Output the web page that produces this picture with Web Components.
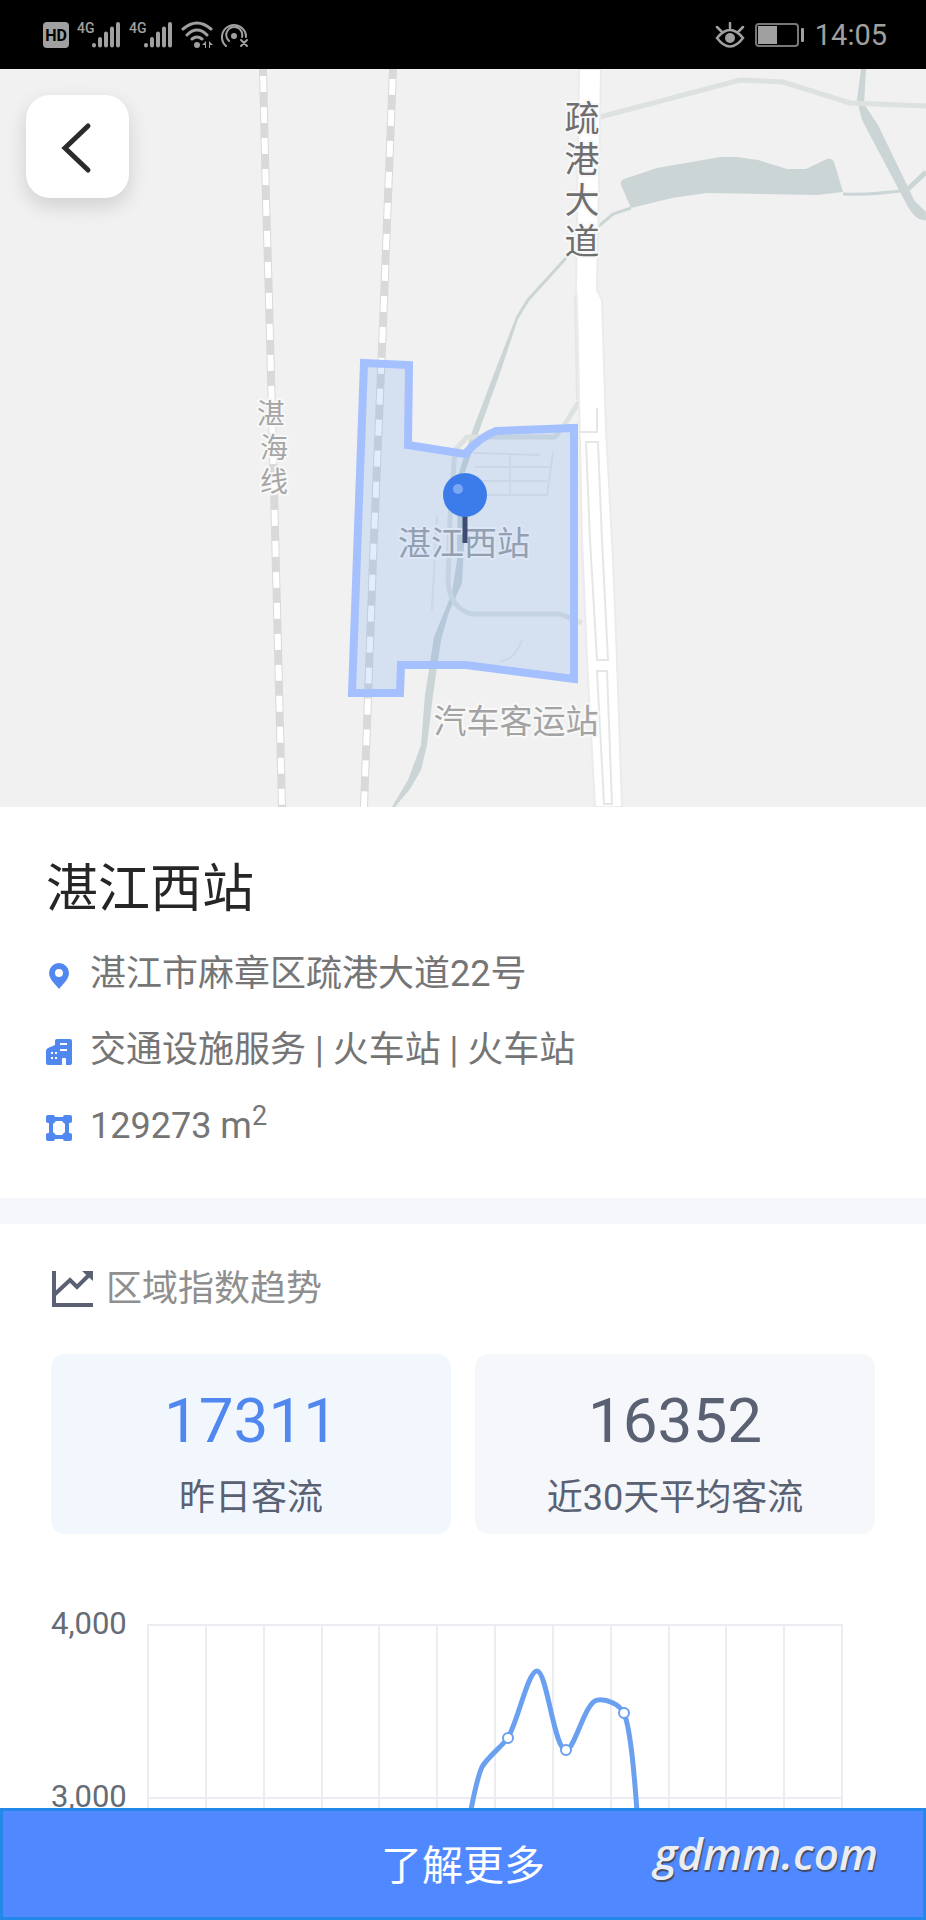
<!DOCTYPE html>
<html lang="zh-CN">
<head>
<meta charset="utf-8">
<meta name="viewport" content="width=device-width, initial-scale=1">
<title>湛江西站</title>
<style>
    body {
        margin: 0;
        font-family: Roboto, "Noto Sans CJK SC", sans-serif;
        background: #fff;
    }
</style>
</head>
<body>
<station-page></station-page>

<script>
class StatusBar extends HTMLElement {
    constructor() {
        super();
        this.attachShadow({mode: "open"});
    }

    connectedCallback() {
        const signal = `
            <svg width="44" height="30" viewBox="0 0 44 30">
                <text x="0" y="13" font-size="14" font-weight="500">4G</text>
                <g stroke="#a0a0a0" stroke-width="4" stroke-linecap="round">
                    <path d="M17 25v.5M23 19v6.500M29 13.500v12M35 8.500v17M41 4v21.500"/>
                </g>
            </svg>`;

        this.shadowRoot.innerHTML = `
        <style>
            :host {
                display: flex;
                flex: none;
                align-items: center;
                justify-content: space-between;
                height: 69px;
                padding: 0 39px 0 43px;
                box-sizing: border-box;
                background: #000;
                color: #a0a0a0;
                font-size: 29px;
            }

            div {
                display: flex;
                align-items: center;
                gap: 8px;
            }

            .right {
                gap: 10px;
            }

            svg {
                display: block;
                fill: #a0a0a0;
            }
        </style>
        <div>
            <svg width="26" height="26" viewBox="0 0 26 26">
                <rect width="26" height="26" rx="4"/>
                <text x="13" y="19" font-size="16" font-weight="700" text-anchor="middle" fill="#000">HD</text>
            </svg>
            ${signal}
            ${signal}
            <svg width="32" height="30" viewBox="0 0 32 30">
                <g fill="none" stroke="#a0a0a0" stroke-width="3" stroke-linecap="round">
                    <path d="M2 9Q16-3 30 9M6 15Q16 5 26 15M11 19Q16 15 21 19"/>
                </g>
                <circle cx="16" cy="25" r="3"/>
                <path d="M21 25l4-4v7h-1v-3zM28 21l4 4h-3v3h-1z"/>
            </svg>
            <svg width="28" height="30" viewBox="0 0 28 30">
                <g fill="none" stroke="#a0a0a0" stroke-width="2" stroke-linecap="round">
                    <path d="M5 26A12 12 0 1 1 25 17M8 21A8 8 0 1 1 21 17"/>
                    <path d="M20 20l6 6M26 20l-6 6"/>
                </g>
                <circle cx="13" cy="16" r="3"/>
            </svg>
        </div>
        <div class="right">
            <svg width="30" height="26" viewBox="0 0 30 26">
                <g fill="none" stroke="#a0a0a0" stroke-width="2.500" stroke-linecap="round">
                    <path d="M2 16Q15 0 28 16Q15 33 2 16zM15 6V1M6 9L2 5M24 9l4-4"/>
                </g>
                <circle cx="15" cy="16" r="5"/>
            </svg>
            <svg width="50" height="24" viewBox="0 0 50 24">
                <rect x="1" y="1" width="42" height="22" rx="3" fill="none" stroke="#777" stroke-width="2"/>
                <rect x="3" y="3" width="19" height="18"/>
                <rect x="46" y="5" width="3" height="14" rx="1"/>
            </svg>
            <span>14:05</span>
        </div>`;
    }
}

class StationMap extends HTMLElement {
    constructor() {
        super();
        this.attachShadow({mode: "open"});
    }

    connectedCallback() {
        this.shadowRoot.innerHTML = `
        <style>
            :host {
                display: block;
                position: relative;
            }

            svg {
                display: block;
                width: 100%;
                height: auto;
            }

            button {
                position: absolute;
                top: 26px;
                left: 26px;
                width: 103px;
                height: 103px;
                padding: 0;
                border: 0;
                border-radius: 24px;
                background: #fff;
                box-shadow: 0 8px 20px rgba(0, 0, 0, 0.14);
                cursor: pointer;
            }

            .label {
                stroke: #f8f8f8;
                stroke-width: 4px;
                stroke-linejoin: round;
                paint-order: stroke;
                text-anchor: middle;
            }
        </style>
        <svg viewBox="0 69 926 738" role="img" aria-label="地图">
            <rect y="69" width="926" height="738" fill="#f1f1f1"/>

            <!-- water -->
            <g fill="#cbd5d6">
                <path d="M624 179L657 168L720 157H737L758 160L787 169H806L827 159Q832 158 834 162L843 192L817 195L707 193L672 198L631 208L621 185Q620 181 624 179z"/>
                <path d="M861 69H866L864 104L878 125L907 185L914 200L926 212V220Q917 222 908 207L862 120L857 100z"/>
                <path d="M516 317L518 319L500 373L478 434L465 472L458 476L472 432L495 371z"/>
                <path d="M458 476H464V545L462 583L449 612L441 640L433 695L427 745L421 770L410 789L395 807H392L408 780L421 745L425 695L434 637L452 593L457 560z"/>
            </g>
            <g fill="none" stroke="#cbd5d6" stroke-width="3">
                <path d="M843 194Q873 195 908 190M631 208L613 214L600 225L566 258L528 300L517 318"/>
                <path d="M908 189L926 172" stroke-width="5"/>
            </g>

            <!-- side roads -->
            <g fill="none" stroke="#dde1e0" stroke-width="5">
                <path d="M600 117L740 80L783 82L850 103L926 106"/>
                <path d="M579 402L563 427L555 437H467L455 450L450 520L448 583Q451 609 472 614H560L582 623"/>
                <g stroke="#e3e6e5" stroke-width="2">
                    <path d="M473 453L540 455M475 467H550M475 481H547M475 495H547L553 452M510 454V495M437 515L432 610M522 640Q514 661 500 661"/>
                </g>
            </g>

            <!-- main road -->
            <path d="M579 69H601L597 290L602 300L606 430L613 560L617 660L622 807H595L587 660L582 540L577 300L576 290z" fill="#fff" stroke="#e9ecea" stroke-width="2"/>
            <g fill="none" stroke="#e3e8e5" stroke-width="2">
                <path d="M575 295L577 400M597 408V432H580M586 442H598L602 540L608 660H597L590 540zM597 671H607L612 804H604z"/>
            </g>

            <!-- railways -->
            <g fill="none">
                <path d="M263 69L266 200L269 300L275 530L282 807" stroke="#d9d9d9" stroke-width="8"/>
                <path d="M263 69L266 200L269 300L275 530L282 807" stroke="#fff" stroke-width="6" stroke-dasharray="16 15" stroke-dashoffset="-7"/>
                <path d="M393 69L384 300L373 560L364 807" stroke="#d9d9d9" stroke-width="8"/>
                <path d="M393 69L384 300L373 560L364 807" stroke="#fff" stroke-width="6" stroke-dasharray="16 15" stroke-dashoffset="-10"/>
            </g>

            <g class="label" font-size="35" fill="#6f6f6f">
                <text x="582" y="131">疏</text>
                <text x="582" y="172">港</text>
                <text x="582" y="213">大</text>
                <text x="582" y="254">道</text>
            </g>
            <g class="label" font-size="28" fill="#a6a6a6">
                <text x="271" y="424">湛</text>
                <text x="274" y="458">海</text>
                <text x="274" y="492">线</text>
            </g>
            <g class="label" font-size="33" fill="#a3a3a3">
                <text x="464" y="555">湛江西站</text>
                <text x="516" y="733">汽车客运站</text>
            </g>

            <!-- station area and pin -->
            <path d="M364 363L409 365L408 445L465 454Q480 437 496 431L574 428V679L466 665H401L400 693H352z" fill="#4f8cf0" fill-opacity=".17" stroke="#a4c0fe" stroke-width="8"/>
            <path d="M465 515V543" stroke="#3f4b73" stroke-width="5"/>
            <circle cx="465" cy="495" r="22" fill="#3b7cea"/>
            <circle cx="458" cy="489" r="5" fill="#7ba6f5"/>
        </svg>
        <button type="button" aria-label="返回">
            <svg viewBox="0 0 103 103">
                <path d="M62 31L39 53L62 75" fill="none" stroke="#2b2b2b" stroke-width="5" stroke-linecap="round"/>
            </svg>
        </button>`;
    }
}

const ICONS = {
    pin: `<path fill-rule="evenodd" d="M13 8a10 10 0 0 0-10 10c0 6 6 11 10 16c4-5 10-10 10-16A10 10 0 0 0 13 8zm0 6a4 4 0 1 1 0 8a4 4 0 0 1 0-8z"/>`,
    building: `<path d="M9 14V10Q9 8 11 8H24Q26 8 26 10V32Q26 34 24 34H20V28Q20 27 19 27H17Q16 27 16 28V34H2Q0 34 0 32V20Q0 18 2 17z"/>
        <path d="M14 13H21M14 19H21M5 22H7M9 22H11M5 27H7M9 27H11" stroke="#fff" stroke-width="2"/>`,
    area: `<path fill-rule="evenodd" d="M3 10H23V32H3zM10 14L7 17V25L10 28H16L19 25V17L16 14z"/>
        <path d="M0 17H2V25H0zM24 17H26V25H24zM10 8H16V9H10zM10 33H16V34H10z" fill="#fff"/>
        <rect y="8" width="9" height="8" rx="2"/><rect x="17" y="8" width="9" height="8" rx="2"/>
        <rect y="26" width="9" height="8" rx="2"/><rect x="17" y="26" width="9" height="8" rx="2"/>`
};

class InfoRow extends HTMLElement {
    constructor() {
        super();
        this.attachShadow({mode: "open"});
    }

    connectedCallback() {
        this.shadowRoot.innerHTML = `
        <style>
            :host {
                display: flex;
                align-items: center;
                gap: 18px;
                min-height: 76px;
                color: #757575;
                font-size: 36px;
                line-height: 48px;
            }

            svg {
                flex: none;
                fill: #5088f0;
            }
        </style>
        <svg width="26" height="30" viewBox="0 4 26 30" aria-hidden="true">${ICONS[this.getAttribute("icon")]}</svg>
        <span><slot></slot></span>`;
    }
}

class StatCard extends HTMLElement {
    constructor() {
        super();
        this.attachShadow({mode: "open"});
    }

    connectedCallback() {
        this.shadowRoot.innerHTML = `
        <style>
            :host {
                display: flex;
                flex: 1;
                flex-direction: column;
                gap: 20px;
                padding: 34px 12px 12px;
                border-radius: 14px;
                background: #f5f7fb;
                color: #5a6172;
                text-align: center;
            }

            :host([active]) {
                background: #f2f7fe;
            }

            .number {
                font-size: 62px;
                line-height: 66px;
            }

            :host([active]) .number {
                color: #5188f0;
            }

            .name {
                font-size: 36px;
                line-height: 48px;
            }
        </style>
        <div class="number">${this.getAttribute("value")}</div>
        <div class="name"><slot></slot></div>`;
    }
}

class TrendChart extends HTMLElement {
    constructor() {
        super();
        this.attachShadow({mode: "open"});
    }

    connectedCallback() {
        let columns = "";
        for (let i = 0; i <= 12; i++) {
            columns += `M${Math.round(97 + i * 694 / 12)} 25V240`;
        }

        const points = [[457, 138], [515, 150], [573, 113]];

        this.shadowRoot.innerHTML = `
        <style>
            :host {
                display: block;
            }

            svg {
                display: block;
                width: 100%;
                height: auto;
            }
        </style>
        <svg viewBox="0 0 824 240" role="img" aria-label="客流趋势">
            <path d="${columns}M96 25H792M96 198H792" fill="none" stroke="#ebedf2" stroke-width="2"/>
            <g font-size="31" fill="#666c76">
                <text x="0" y="34">4,000</text>
                <text x="0" y="207">3,000</text>
            </g>
            <path d="M414 240C420 212 424 182 431 167C436 158 448 149 457 138C468 118 477 71 486 71C496 71 503 150 515 150C524 150 534 100 547 100C556 99 568 104 573 113C580 130 584 180 588 240" fill="none" stroke="#6ba0f0" stroke-width="5"/>
            ${points.map(([x, y]) => `<circle cx="${x}" cy="${y}" r="5" fill="#fff" stroke="#6ba0f0" stroke-width="2"/>`).join("")}
        </svg>`;
    }
}

class MoreBar extends HTMLElement {
    constructor() {
        super();
        this.attachShadow({mode: "open"});
    }

    connectedCallback() {
        this.shadowRoot.innerHTML = `
        <style>
            :host {
                display: block;
                flex: none;
                position: relative;
            }

            button {
                display: block;
                width: 100%;
                height: 112px;
                padding: 0 0 4px;
                border: 3px solid #2388e8;
                background: #5089ff;
                color: #fff;
                font-family: inherit;
                font-size: 41px;
                cursor: pointer;
            }

            .mark {
                position: absolute;
                right: 48px;
                bottom: 37px;
                color: #ebedf3;
                font-family: "Open Sans", sans-serif;
                font-size: 44px;
                font-style: italic;
                font-weight: 600;
                line-height: 60px;
                text-shadow: 1px 2px 1px #404860;
                pointer-events: none;
            }
        </style>
        <button type="button"><slot></slot></button>
        <span class="mark">gdmm.com</span>`;
    }
}

class StationPage extends HTMLElement {
    constructor() {
        super();
        this.attachShadow({mode: "open"});
    }

    connectedCallback() {
        this.shadowRoot.innerHTML = `
        <style>
            :host {
                display: flex;
                flex-direction: column;
                height: 100vh;
            }

            main {
                flex: 1;
                min-height: 0;
                overflow-x: hidden;
                overflow-y: auto;
                scrollbar-width: none;
            }

            .info {
                padding: 51px 46px 34px;
                border-bottom: 26px solid #f5f7fb;
            }

            h1 {
                margin: 0 0 14px;
                color: #262626;
                font-size: 52px;
                font-weight: 400;
                line-height: 64px;
            }

            sup {
                font-size: 27px;
                line-height: 0;
            }

            .trend {
                padding: 40px 51px 0;
            }

            h2 {
                display: flex;
                align-items: center;
                gap: 13px;
                margin: 0 0 40px;
                color: #8f8f8f;
                font-size: 36px;
                font-weight: 400;
                line-height: 50px;
            }

            .cards {
                display: flex;
                gap: 24px;
                margin-bottom: 66px;
            }
        </style>
        <status-bar></status-bar>
        <main>
            <station-map></station-map>
            <section class="info">
                <h1>湛江西站</h1>
                <info-row icon="pin">湛江市麻章区疏港大道22号</info-row>
                <info-row icon="building">交通设施服务 | 火车站 | 火车站</info-row>
                <info-row icon="area">129273 m<sup>2</sup></info-row>
            </section>
            <section class="trend">
                <h2>
                    <svg width="42" height="36" viewBox="0 0 42 36" aria-hidden="true">
                        <path d="M3 0V34H42M3 24L19 9L26 16L38 4" fill="none" stroke="#5a6172" stroke-width="4"/>
                        <path d="M31 0H42V10z" fill="#5a6172"/>
                    </svg>
                    区域指数趋势
                </h2>
                <div class="cards">
                    <stat-card value="17311" active>昨日客流</stat-card>
                    <stat-card value="16352">近30天平均客流</stat-card>
                </div>
                <trend-chart></trend-chart>
            </section>
        </main>
        <more-bar>了解更多</more-bar>`;
    }
}

customElements.define("status-bar", StatusBar);
customElements.define("station-map", StationMap);
customElements.define("info-row", InfoRow);
customElements.define("stat-card", StatCard);
customElements.define("trend-chart", TrendChart);
customElements.define("more-bar", MoreBar);
customElements.define("station-page", StationPage);
</script>
</body>
</html>
